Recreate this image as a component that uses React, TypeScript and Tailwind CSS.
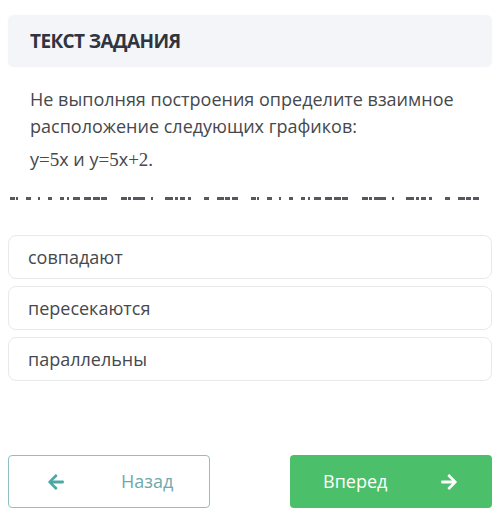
import React from 'react'
import { FaArrowLeft, FaArrowRight } from 'react-icons/fa'

const dashes = [
  [10, 5], [16, 2], [26, 5], [38, 2], [48, 4], [60, 4], [67, 2], [73, 7], [84, 7], [93, 7], [101, 6],
  [121, 6], [128, 3], [133, 12], [151, 2], [165, 8], [175, 3], [180, 5], [188, 3], [204, 5], [217, 7],
  [225, 5], [232, 6],
]

const DashedLine = () => (
  <svg width="484" height="3" className="block">
    {dashes.map(([x, w], i) => (
      <rect key={'a' + i} x={x - 8} y={0} width={w} height={3} fill="#55595f" />
    ))}
    {dashes.map(([x, w], i) => (
      <rect key={'b' + i} x={x + 241 - 8} y={0} width={w} height={3} fill="#55595f" />
    ))}
  </svg>
)

const options = ['совпадают', 'пересекаются', 'параллельны']

const serif = { fontFamily: '"Liberation Serif", serif' }

export default function App() {
  return (
    <div
      className="w-[500px] h-[518px] bg-white px-2 overflow-hidden"
      style={{ fontFamily: '"Open Sans", "Noto Sans", sans-serif' }}
    >
      <div className="mt-[15px] h-[52px] rounded-md bg-[#f4f5f8] flex items-center pl-[22px] shadow-[0_0_2px_rgba(0,0,0,0.04)]">
        <span className="text-[19px] font-bold text-[#2f3440] tracking-[-0.6px]">ТЕКСТ ЗАДАНИЯ</span>
      </div>

      <div className="pl-[22px] pt-[19px] text-[18px] leading-[27px] text-[#45484d]">
        <p>Не выполняя построения определите взаимное расположение следующих графиков:</p>
        <p className="mt-[6px]">
          y<span className="text-[19px]" style={serif}>=5</span>x и y
          <span className="text-[19px]" style={serif}>=5</span>x
          <span className="text-[19px]" style={serif}>+2.</span>
        </p>
      </div>

      <div className="mt-[24px]">
        <DashedLine />
      </div>

      <div className="mt-[35px] flex flex-col gap-[7px]">
        {options.map((o) => (
          <div
            key={o}
            className="h-[44px] rounded-lg border border-[#e8e9eb] bg-white flex items-center pl-[19px] text-[18px] text-[#45484d]"
          >
            {o}
          </div>
        ))}
      </div>

      <div className="mt-[74px] flex justify-between">
        <button className="w-[202px] h-[53px] rounded border border-[#8fbfc3] bg-white flex items-center text-[18px] text-[#6fa9ae]">
          <FaArrowLeft className="ml-[38px] w-[18px] h-[18px] text-[#4aa9a6]" />
          <span className="ml-[56px]">Назад</span>
        </button>
        <button className="w-[202px] h-[53px] rounded bg-[#4cbf6a] flex items-center text-[18px] text-white">
          <span className="ml-[33px]">Вперед</span>
          <FaArrowRight className="ml-auto mr-[34px] w-[18px] h-[18px] text-white" />
        </button>
      </div>
    </div>
  )
}
